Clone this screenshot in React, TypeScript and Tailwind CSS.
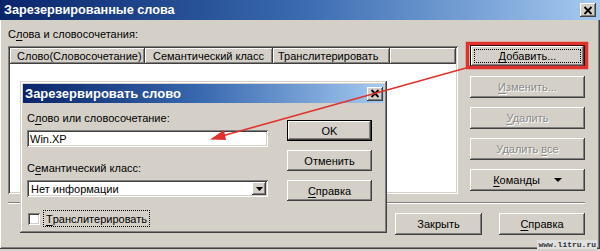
import React from "react";

const U = ({ children }: { children: React.ReactNode }) => (
  <span className="underline underline-offset-[2px] decoration-[1px]">{children}</span>
);

function CloseBtn() {
  return (
    <div className="w-[16px] h-[14px] bg-[#d4d0c8] shadow-[inset_-1px_-1px_#404040,inset_1px_1px_#ffffff,inset_-2px_-2px_#808080] flex items-center justify-center">
      <svg width="10" height="9" viewBox="0 0 10 9">
        <path d="M1.5 1 L8.5 8 M8.5 1 L1.5 8" stroke="#000" strokeWidth="1.8" />
      </svg>
    </div>
  );
}

function Btn({
  children,
  className,
  disabled,
  def,
  focus,
}: {
  children: React.ReactNode;
  className: string;
  disabled?: boolean;
  def?: boolean;
  focus?: boolean;
}) {
  return (
    <div
      className={
        "relative flex items-center justify-center bg-[#d4d0c8] " +
        (def
          ? "shadow-[inset_0_0_0_1px_#000000,inset_-2px_-2px_#404040,inset_2px_2px_#ffffff,inset_-3px_-3px_#808080] "
          : "shadow-[inset_-1px_-1px_#404040,inset_1px_1px_#ffffff,inset_-2px_-2px_#808080] ") +
        (disabled ? "text-[#8a8a8a] [text-shadow:1px_1px_0_#ffffff] " : "text-black ") +
        className
      }
    >
      {focus && (
        <div className="absolute left-[4px] right-[4px] top-[4px] bottom-[4px] border border-dotted border-black" />
      )}
      <span className="relative">{children}</span>
    </div>
  );
}

export default function App() {
  return (
    <div className="w-[600px] h-[251px] bg-[#d4d0c8] relative overflow-hidden font-['Liberation_Sans',Arial,sans-serif] text-[11px] leading-[14px] text-black">
      {/* Outer window */}
      <div className="h-[249px] flex flex-col shadow-[inset_-1px_-1px_#404040,inset_1px_1px_#ffffff,inset_-2px_-2px_#808080]">
        <div className="h-[20px] shrink-0 flex items-center justify-between pl-[4px] pr-[4px] bg-linear-to-r from-[#0a246a] via-[#3a6ab0] to-[#a6caf0]">
          <span className="text-white font-bold text-[12.7px]">Зарезервированные слова</span>
          <CloseBtn />
        </div>
        <div className="flex flex-col pl-[8px] pr-[15px] pt-[7px]">
          <div className="flex gap-[12px]">
            <div className="flex flex-col w-[450px]">
              <div className="h-[14px]">
                С<U>л</U>ова и словосочетания:
              </div>
              <div className="mt-[5px] h-[148px] bg-white p-[2px] shadow-[inset_1px_1px_#808080,inset_-1px_-1px_#ffffff,inset_2px_2px_#404040,inset_-2px_-2px_#d4d0c8]">
                <div className="flex h-[16px]">
                  <div className="w-[135px] h-full bg-[#d4d0c8] pl-[7px] flex items-center shadow-[inset_-1px_-1px_#404040,inset_1px_1px_#ffffff,inset_-2px_-2px_#808080]">
                    Слово(Словосочетание)
                  </div>
                  <div className="w-[128px] h-full bg-[#d4d0c8] pl-[8px] flex items-center shadow-[inset_-1px_-1px_#404040,inset_1px_1px_#ffffff,inset_-2px_-2px_#808080]">
                    Семантический класс
                  </div>
                  <div className="w-[117px] h-full bg-[#d4d0c8] pl-[5px] flex items-center shadow-[inset_-1px_-1px_#404040,inset_1px_1px_#ffffff,inset_-2px_-2px_#808080]">
                    Транслитерировать
                  </div>
                  <div className="flex-1 h-full bg-[#d4d0c8] shadow-[inset_-1px_-1px_#404040,inset_1px_1px_#ffffff,inset_-2px_-2px_#808080]" />
                </div>
              </div>
            </div>
            <div className="flex flex-col gap-[9px] w-[115px] pt-[18px]">
              <Btn className="h-[22px]" def focus>
                <U>Д</U>обавить...
              </Btn>
              <Btn className="h-[22px]" disabled>
                <U>И</U>зменить...
              </Btn>
              <Btn className="h-[22px]" disabled>
                <U>У</U>далить
              </Btn>
              <Btn className="h-[22px]" disabled>
                Удалить <U>в</U>се
              </Btn>
              <Btn className="h-[22px]">
                <span className="flex items-center gap-[14px]">
                  <span>
                    <U>К</U>оманды
                  </span>
                  <svg width="8" height="4" viewBox="0 0 8 4">
                    <path d="M0 0 H8 L4 4 Z" fill="#000" />
                  </svg>
                </span>
              </Btn>
            </div>
          </div>
          <div className="mt-[8px] h-[2px] border-t border-[#808080] border-b border-b-white" />
          <div className="mt-[9px] flex justify-end gap-[17px]">
            <Btn className="h-[22px] w-[87px]">Закрыть</Btn>
            <Btn className="h-[22px] w-[86px]">
              <U>С</U>правка
            </Btn>
          </div>
        </div>
      </div>

      {/* Inner dialog */}
      <div className="absolute left-[20px] top-[81px] w-[367px] h-[152px] bg-[#d4d0c8] p-[3px] flex flex-col shadow-[inset_-1px_-1px_#404040,inset_1px_1px_#d4d0c8,inset_-2px_-2px_#808080,inset_2px_2px_#ffffff]">
        <div className="h-[19px] shrink-0 flex items-center justify-between pl-[2px] pr-[1px] bg-linear-to-r from-[#0a246a] via-[#3a6ab0] to-[#a6caf0]">
          <span className="text-white font-bold text-[13px]">Зарезервировать слово</span>
          <CloseBtn />
        </div>
        <div className="flex pl-[4px] pt-[8px] gap-[19px]">
          <div className="flex flex-col w-[241px]">
            <div className="h-[14px]">
              С<U>л</U>ово или словосочетание:
            </div>
            <div className="mt-[5px] h-[17px] bg-white pl-[3px] flex items-center shadow-[inset_1px_1px_#808080,inset_-1px_-1px_#ffffff,inset_2px_2px_#404040,inset_-2px_-2px_#d4d0c8]">
              Win.XP
            </div>
            <div className="mt-[14px] h-[14px]">
              С<U>е</U>мантический класс:
            </div>
            <div className="mt-[5px] h-[17px] bg-white pl-[4px] pr-[2px] flex items-center justify-between shadow-[inset_1px_1px_#808080,inset_-1px_-1px_#ffffff,inset_2px_2px_#404040,inset_-2px_-2px_#d4d0c8]">
              <span>Нет информации</span>
              <div className="w-[14px] h-[13px] bg-[#d4d0c8] flex items-center justify-center shadow-[inset_-1px_-1px_#404040,inset_1px_1px_#ffffff,inset_-2px_-2px_#808080]">
                <svg width="7" height="4" viewBox="0 0 7 4">
                  <path d="M0 0 H7 L3.5 4 Z" fill="#000" />
                </svg>
              </div>
            </div>
            <div className="mt-[13px] flex items-center gap-[3px]">
              <div className="w-[12px] h-[12px] ml-[1px] bg-white shadow-[inset_1px_1px_#808080,inset_-1px_-1px_#ffffff,inset_2px_2px_#404040,inset_-2px_-2px_#d4d0c8]" />
              <div className="h-[17px] px-[2px] flex items-center border border-dotted border-black">
                <U>Т</U>ранслитерировать
              </div>
            </div>
          </div>
          <div className="flex flex-col gap-[9px] w-[85px] pt-[9px]">
            <Btn className="h-[21px]" def>
              OK
            </Btn>
            <Btn className="h-[21px]">Отменить</Btn>
            <Btn className="h-[21px]">
              <U>С</U>правка
            </Btn>
          </div>
        </div>
      </div>

      {/* Red annotation */}
      <svg className="absolute left-0 top-0 pointer-events-none" width="600" height="251" viewBox="0 0 600 251">
        <rect x="467.5" y="43.5" width="119" height="24" fill="none" stroke="#e0322c" strokeWidth="3.5" />
        <line x1="466" y1="68" x2="222" y2="136" stroke="#e0322c" strokeWidth="1.6" />
        <path d="M210 139.5 L224 130 L226 140 Z" fill="#e0322c" />
      </svg>

      {/* Watermark */}
      <div className="absolute right-[3px] bottom-[2px] px-[1px] bg-[#e0e0e0] font-['Liberation_Mono',monospace] font-bold text-[8px] leading-[9px] text-[#333]">
        www.litru.ru
      </div>
    </div>
  );
}
